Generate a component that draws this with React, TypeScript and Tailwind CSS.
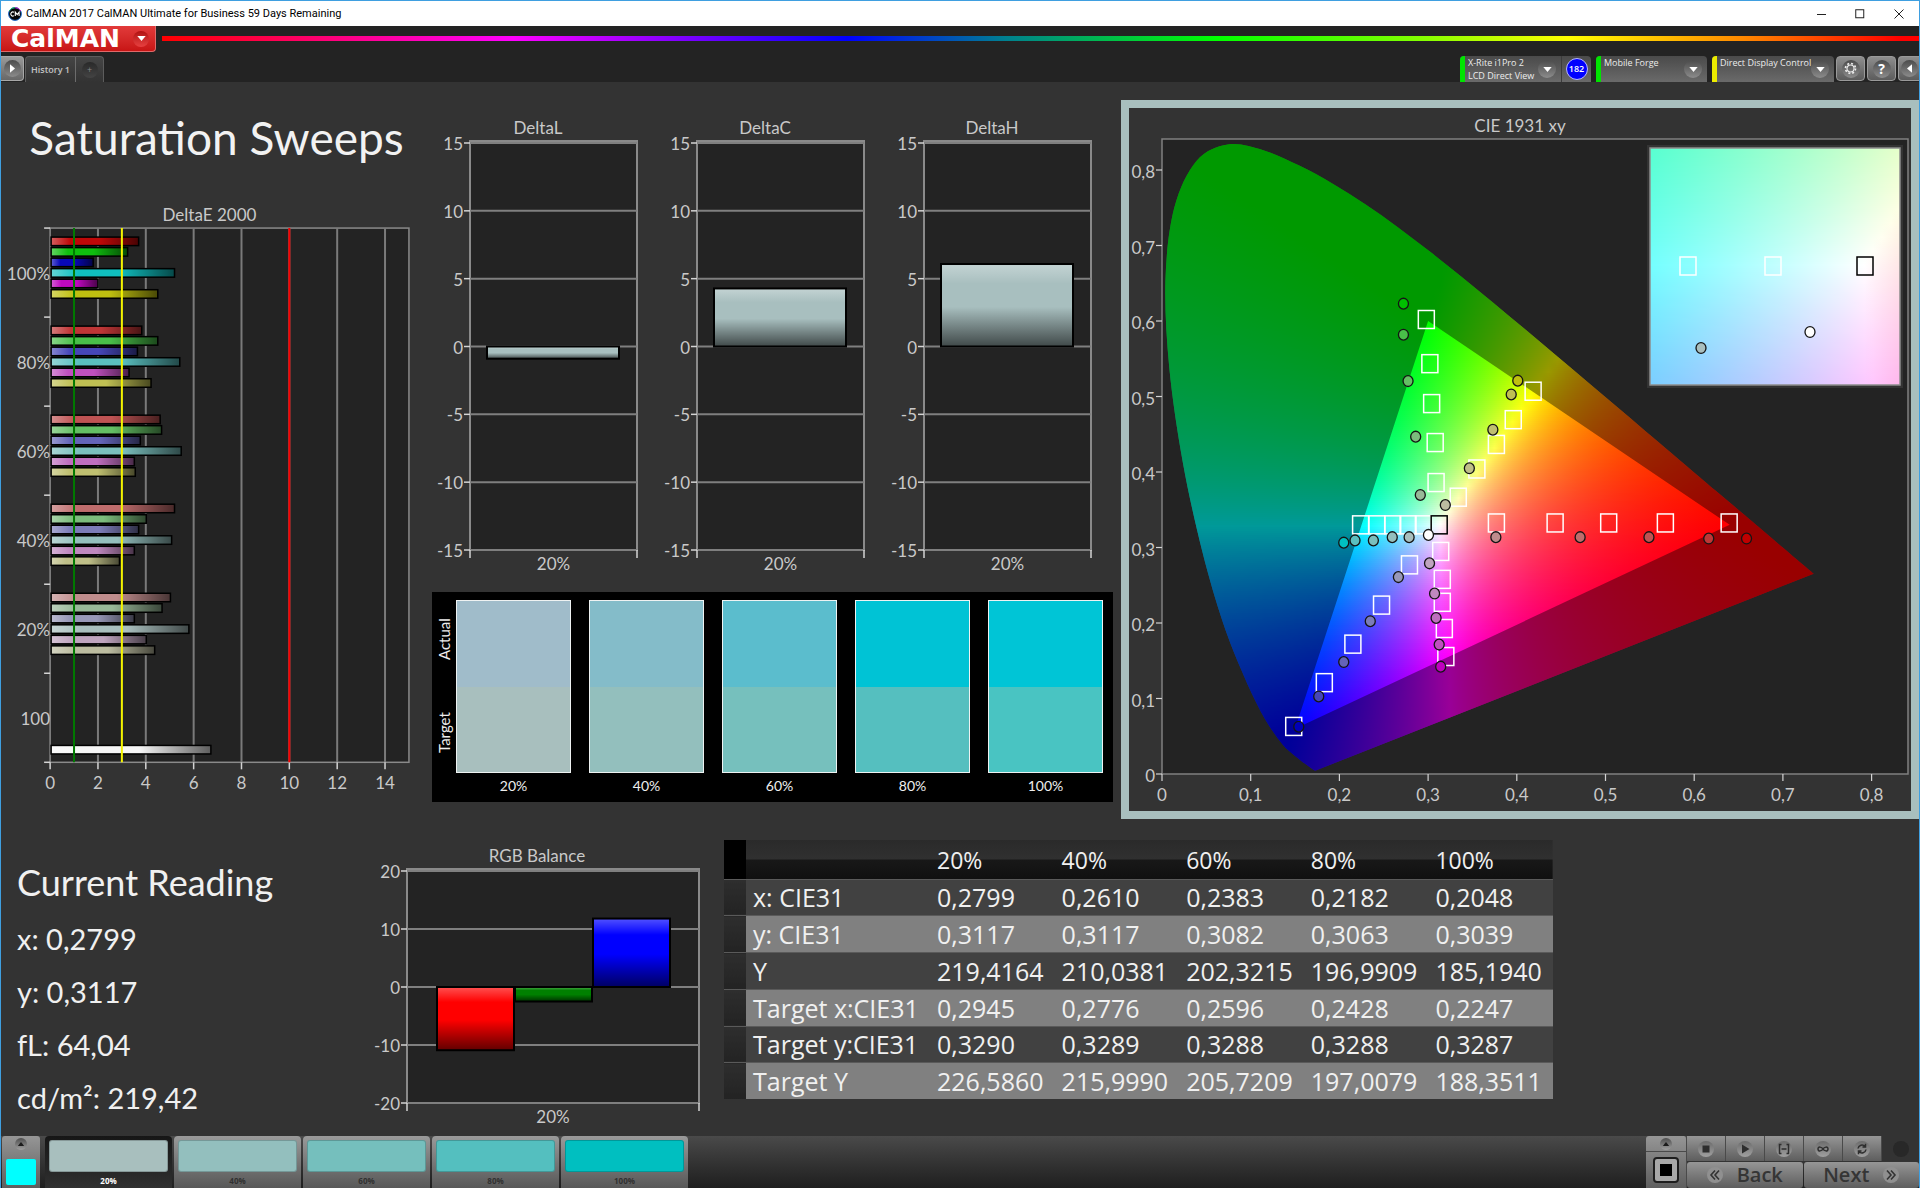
import React from 'react';

const LATO = "font-['Lato','Open_Sans',sans-serif]";
const OPEN = "font-['Open_Sans','Noto_Sans',sans-serif]";

/* ---------- shared chart pieces ---------- */

const AXIS = '#8a8a8a';
const TICK = '#d4d4d4';
const LABEL = '#c9c9c9';
const PLOT = '#232323';

type TextProps = { x: number; y: number; anchor?: 'start' | 'middle' | 'end'; children: React.ReactNode };

function AxisText({ x, y, anchor = 'middle', children }: TextProps) {
  return (
    <text x={x} y={y + 6} textAnchor={anchor} fill={LABEL} className="text-[17px]">
      {children}
    </text>
  );
}

/* ---------- Delta E 2000 ---------- */

const deltaE: { label: string; bars: [string, number][] }[] = [
  { label: '100%', bars: [['#bf0808', 3.7], ['#0fbf0f', 3.24], ['#0808b8', 1.8], ['#10bfbf', 5.2], ['#bf08bf', 2.0], ['#bfbf10', 4.5]] },
  { label: '80%', bars: [['#bf3636', 3.83], ['#49bf49', 4.5], ['#4646b8', 3.65], ['#5abfbf', 5.42], ['#bf50bf', 3.3], ['#bfbf53', 4.22]] },
  { label: '60%', bars: [['#bf5353', 4.6], ['#64bf64', 4.66], ['#6464b8', 3.77], ['#7abfbd', 5.48], ['#bf6ebf', 3.52], ['#bfbf70', 3.56]] },
  { label: '40%', bars: [['#bf6c6c', 5.2], ['#7cbc7c', 4.02], ['#7c7cb8', 3.7], ['#94bfbd', 5.08], ['#bf88bf', 3.52], ['#bfbf88', 2.9]] },
  { label: '20%', bars: [['#bf8c8c', 5.03], ['#98b898', 4.68], ['#9898b8', 3.52], ['#a9bfbe', 5.8], ['#bfa4bf', 4.02], ['#bcbca0', 4.37]] },
];

function DeltaEChart() {
  const left = 49;
  const right = 407;
  const top = 28;
  const bottom = 561;
  const group = (bottom - top) / 6;
  const px = (v: number) => left + v * ((right - left) / 15);
  const bar = (g: number, i: number, color: string, v: number) => {
    const y = top + g * group + 9 + i * 10.5;
    return (
      <g key={`${g}-${i}`}>
        <rect x={left + 1} y={y} width={px(v) - left - 1} height={8.5} fill={color} />
        <rect x={left + 1} y={y} width={px(v) - left - 1} height={8.5} fill="url(#barShadeH)" stroke="#000" strokeWidth={1.5} />
      </g>
    );
  };
  return (
    <svg viewBox="0 0 430 600" className={`block h-auto w-full ${LATO}`} role="img" aria-label="DeltaE 2000">
      <defs>
        <linearGradient id="barShadeH">
          <stop offset="0" stopColor="#fff" stopOpacity=".35" />
          <stop offset=".22" stopColor="#fff" stopOpacity="0" />
          <stop offset=".55" stopColor="#000" stopOpacity="0" />
          <stop offset="1" stopColor="#000" stopOpacity=".62" />
        </linearGradient>
      </defs>
      <AxisText x={208} y={15}>DeltaE 2000</AxisText>
      <rect x={left} y={top} width={right - left} height={bottom - top} fill={PLOT} stroke={AXIS} strokeWidth={1.5} />
      {[2, 4, 6, 8, 10, 12, 14].map((v) => (
        <line key={v} x1={px(v)} x2={px(v)} y1={top} y2={bottom} stroke="#7a7a7a" strokeWidth={2} />
      ))}
      {[0, 2, 4, 6, 8, 10, 12, 14].map((v) => (
        <g key={v}>
          <line x1={px(v)} x2={px(v)} y1={bottom} y2={bottom + 7} stroke={TICK} strokeWidth={1.5} />
          <AxisText x={px(v)} y={582}>{v}</AxisText>
        </g>
      ))}
      {[0, 1, 2, 3, 4, 5, 6].map((i) => (
        <line key={i} x1={left - 6} x2={left} y1={top + i * group} y2={top + i * group} stroke={TICK} strokeWidth={1.5} />
      ))}
      {deltaE.map((g, gi) => (
        <g key={g.label}>
          <AxisText x={49} y={top + gi * group + 46} anchor="end">{g.label}</AxisText>
          {g.bars.map(([c, v], i) => bar(gi, i, c, v))}
        </g>
      ))}
      <AxisText x={49} y={top + 5 * group + 46} anchor="end">100</AxisText>
      {bar(5, 6, '#f6f6f6', 6.72)}
      <line x1={px(1)} x2={px(1)} y1={top} y2={bottom} stroke="#007a00" strokeWidth={2} />
      <line x1={px(3)} x2={px(3)} y1={top} y2={bottom} stroke="#f4f400" strokeWidth={2} />
      <line x1={px(10)} x2={px(10)} y1={top} y2={bottom} stroke="#f80000" strokeWidth={2} />
    </svg>
  );
}

/* ---------- vertical bar charts ---------- */

type VBar = { x: number; w: number; value: number; color: string };
type VChartProps = {
  title: string;
  titleX: number;
  width: number;
  height: number;
  left: number;
  right: number;
  frameTop: number;
  top: number;
  bottom: number;
  max: number;
  step: number;
  bars: VBar[];
};

function VerticalChart(p: VChartProps) {
  const py = (v: number) => p.top + ((p.max - v) / (2 * p.max)) * (p.bottom - p.top);
  const ticks: number[] = [];
  for (let v = p.max; v >= -p.max; v -= p.step) ticks.push(v);
  const id = `shade-${p.title.replace(/\s/g, '')}`;
  return (
    <svg viewBox={`0 0 ${p.width} ${p.height}`} className={`block h-auto w-full ${LATO}`} role="img" aria-label={p.title}>
      <defs>
        <linearGradient id={id} x1="0" y1="0" x2="0" y2="1">
          <stop offset="0" stopColor="#fff" stopOpacity=".32" />
          <stop offset=".24" stopColor="#fff" stopOpacity="0" />
          <stop offset=".52" stopColor="#000" stopOpacity="0" />
          <stop offset="1" stopColor="#000" stopOpacity=".62" />
        </linearGradient>
      </defs>
      <AxisText x={p.titleX} y={p.frameTop - 13}>{p.title}</AxisText>
      <rect x={p.left} y={p.frameTop} width={p.right - p.left} height={p.bottom - p.frameTop} fill={PLOT} stroke={AXIS} strokeWidth={2} />
      {ticks.map((v) => (
        <g key={v}>
          <line x1={p.left} x2={p.right} y1={py(v)} y2={py(v)} stroke="#7f7f7f" strokeWidth={2} />
          <line x1={p.left - 6} x2={p.left} y1={py(v)} y2={py(v)} stroke={TICK} strokeWidth={1.5} />
          <AxisText x={p.left - 7} y={py(v) + 1} anchor="end">{v}</AxisText>
        </g>
      ))}
      {[p.left, p.right].map((x) => (
        <line key={x} x1={x} x2={x} y1={p.bottom} y2={p.bottom + 8} stroke={TICK} strokeWidth={1.5} />
      ))}
      {p.bars.map((b) => {
        const y0 = Math.min(py(0), py(b.value));
        const h = Math.abs(py(0) - py(b.value));
        return (
          <g key={b.x}>
            <rect x={b.x} y={y0} width={b.w} height={h} fill={b.color} />
            <rect x={b.x} y={y0} width={b.w} height={h} fill={`url(#${id})`} stroke="#000" strokeWidth={2} />
          </g>
        );
      })}
      <AxisText x={(p.left + p.right) / 2} y={p.bottom + 14}>20%</AxisText>
    </svg>
  );
}

/* ---------- CIE 1931 diagram ---------- */

const locus: [number, number][] = [
  [0.1741, 0.005], [0.1714, 0.0051], [0.1644, 0.0109], [0.1566, 0.0177], [0.144, 0.0297], [0.1355, 0.0399],
  [0.1241, 0.0578], [0.1096, 0.0868], [0.0913, 0.1327], [0.0687, 0.2007], [0.0454, 0.295], [0.0235, 0.4127],
  [0.0082, 0.5384], [0.0039, 0.6548], [0.0139, 0.7502], [0.0389, 0.812], [0.0743, 0.8338], [0.1142, 0.8262],
  [0.1547, 0.8059], [0.1929, 0.7816], [0.2296, 0.7543], [0.2658, 0.7243], [0.3016, 0.6923], [0.3373, 0.6589],
  [0.3731, 0.6245], [0.4087, 0.5896], [0.4441, 0.5547], [0.4788, 0.5202], [0.5125, 0.4866], [0.5448, 0.4544],
  [0.5752, 0.4242], [0.6029, 0.3965], [0.627, 0.3725], [0.6658, 0.334], [0.6915, 0.3083], [0.719, 0.2809],
  [0.7347, 0.2653],
];
const gamut: [number, number][] = [[0.64, 0.33], [0.3, 0.6], [0.15, 0.06]];

const targets: [number, number][] = [
  [0.298, 0.602], [0.302, 0.5435], [0.304, 0.4906], [0.308, 0.439], [0.309, 0.386],
  [0.4184, 0.507], [0.396, 0.4693], [0.377, 0.4365], [0.355, 0.404], [0.334, 0.3666],
  [0.377, 0.3325], [0.4432, 0.3325], [0.5036, 0.3325], [0.5675, 0.3325], [0.6394, 0.3325],
  [0.2239, 0.33], [0.2423, 0.33], [0.2601, 0.33], [0.2774, 0.33], [0.2947, 0.33],
  [0.279, 0.277], [0.2475, 0.2237], [0.2152, 0.172], [0.183, 0.121], [0.1485, 0.063],
  [0.3142, 0.2948], [0.316, 0.2578], [0.316, 0.2274], [0.3183, 0.1927], [0.32, 0.1556],
];
const measured: [number, number, string][] = [
  [0.2722, 0.623, '#00c000'], [0.2722, 0.5818, '#49bf49'], [0.2774, 0.5204, '#64bf64'], [0.286, 0.4468, '#7cbc7c'], [0.2912, 0.3696, '#98b898'],
  [0.4011, 0.521, '#bfbf10'], [0.3937, 0.5027, '#bfbf53'], [0.373, 0.456, '#bfbf70'], [0.3465, 0.4049, '#bfbf88'], [0.3194, 0.3562, '#bcbca0'],
  [0.3764, 0.3137, '#bf8c8c'], [0.4714, 0.3137, '#bf6c6c'], [0.549, 0.3137, '#bf5353'], [0.6164, 0.3119, '#bf3636'], [0.659, 0.3119, '#c00000'],
  [0.2049, 0.3064, '#00c0c0'], [0.2176, 0.3094, '#5abfbf'], [0.2383, 0.3094, '#7abfbd'], [0.2596, 0.3137, '#94bfbd'], [0.2786, 0.3137, '#a9bfbe'],
  [0.3004, 0.3167, '#ffffff'],
  [0.2665, 0.2608, '#9898b8'], [0.2348, 0.2024, '#7c7cb8'], [0.2049, 0.1483, '#6464b8'], [0.1767, 0.1027, '#4646b8'], [0.1542, 0.0626, '#0000b8'],
  [0.3016, 0.279, '#bfa4bf'], [0.3073, 0.239, '#bf88bf'], [0.309, 0.2067, '#bf6ebf'], [0.3125, 0.1714, '#bf50bf'], [0.3142, 0.1422, '#c000c0'],
];

/* Chromaticity to an RGB colour scaled so that its largest channel is full. */
function chromaColor(x: number, y: number) {
  const yy = Math.max(y, 0.001);
  const X = x / yy;
  const Z = (1 - x - yy) / yy;
  const rgb = [
    3.2406 * X - 1.5372 - 0.4986 * Z,
    -0.9689 * X + 1.8758 + 0.0415 * Z,
    0.0557 * X - 0.204 + 1.057 * Z,
  ].map((c) => Math.max(c, 0));
  const m = Math.max(...rgb, 0.0001);
  return `rgb(${rgb.map((c) => Math.round((c / m) * 255)).join(',')})`;
}

type FieldProps = {
  id: string;
  x: number;
  y: number;
  w: number;
  h: number;
  toXY: (px: number, py: number) => [number, number];
};

/* Thin horizontal strips, each filled with a gradient sampled from the colour space. */
function ColorField({ id, x, y, w, h, toXY }: FieldProps) {
  const rowH = 2;
  const cols = Math.ceil(w / 9);
  const rows = Array.from({ length: Math.ceil(h / rowH) }, (_, i) => y + i * rowH);
  return (
    <g shapeRendering="crispEdges">
      {rows.map((ry, i) => (
        <g key={i}>
          <linearGradient id={`${id}${i}`}>
            {Array.from({ length: cols + 1 }, (_, c) => (
              <stop key={c} offset={c / cols} stopColor={chromaColor(...toXY(x + (c / cols) * w, ry + rowH / 2))} />
            ))}
          </linearGradient>
          <rect x={x} y={ry} width={w} height={rowH} fill={`url(#${id}${i})`} />
        </g>
      ))}
    </g>
  );
}

function smoothPath(pts: [number, number][]) {
  let d = `M${pts[0][0]} ${pts[0][1]}`;
  for (let i = 0; i < pts.length - 1; i++) {
    const p0 = pts[Math.max(i - 1, 0)];
    const p1 = pts[i];
    const p2 = pts[i + 1];
    const p3 = pts[Math.min(i + 2, pts.length - 1)];
    d += `C${p1[0] + (p2[0] - p0[0]) / 6} ${p1[1] + (p2[1] - p0[1]) / 6} ${p2[0] - (p3[0] - p1[0]) / 6} ${p2[1] - (p3[1] - p1[1]) / 6} ${p2[0]} ${p2[1]}`;
  }
  return d + 'Z';
}

function Target({ cx, cy, color = '#fff' }: { cx: number; cy: number; color?: string }) {
  return <rect x={cx - 8} y={cy - 9} width={16} height={18} fill="none" stroke={color} strokeWidth={1.5} />;
}

function Dot({ cx, cy, color }: { cx: number; cy: number; color: string }) {
  return <ellipse cx={cx} cy={cy} rx={5} ry={5.4} fill={color} stroke="#151515" strokeWidth={1.3} />;
}

function CieChart() {
  const left = 33;
  const right = 779;
  const top = 31;
  const bottom = 666;
  const sx = 887;
  const sy = 755;
  const px = (v: number) => left + v * sx;
  const py = (v: number) => bottom - v * sy;
  const locusPath = smoothPath(locus.map(([x, y]) => [px(x), py(y)]));
  const gamutPath = `M${gamut.map(([x, y]) => `${px(x)} ${py(y)}`).join('L')}Z`;
  const inset = { x: 521, y: 40, w: 250, h: 237 };
  const fmt = (i: number) => (i === 0 ? '0' : `0,${i}`);
  return (
    <svg viewBox="0 0 782 703" className={`block h-auto w-full ${LATO}`} role="img" aria-label="CIE 1931 xy">
      <defs>
        <clipPath id="locusClip"><path d={locusPath} /></clipPath>
        <clipPath id="insetClip"><rect x={inset.x} y={inset.y} width={inset.w} height={inset.h} /></clipPath>
      </defs>
      <AxisText x={391} y={18}>CIE 1931 xy</AxisText>
      <rect x={left} y={top} width={right - left} height={bottom - top} fill={PLOT} stroke="#808080" strokeWidth={1.5} />
      <g clipPath="url(#locusClip)">
        <ColorField id="main" x={px(0)} y={Math.floor(py(0.84))} w={0.74 * sx} h={0.84 * sy} toXY={(x, y) => [(x - left) / sx, (bottom - y) / sy]} />
        <path d={`M0 0H782V703H0Z${gamutPath}`} fillRule="evenodd" fill="#000" fillOpacity=".4" />
      </g>
      {[0, 1, 2, 3, 4, 5, 6, 7, 8].map((i) => (
        <g key={i}>
          <line x1={px(i / 10)} x2={px(i / 10)} y1={bottom} y2={bottom + 7} stroke={TICK} strokeWidth={1.2} />
          <line x1={left - 6} x2={left} y1={py(i / 10)} y2={py(i / 10)} stroke={TICK} strokeWidth={1.2} />
          <AxisText x={px(i / 10)} y={687}>{fmt(i)}</AxisText>
          <AxisText x={left - 7} y={py(i / 10) + 2} anchor="end">{fmt(i)}</AxisText>
        </g>
      ))}
      {targets.map(([x, y], i) => <Target key={i} cx={px(x)} cy={py(y)} />)}
      <Target cx={px(0.3125)} cy={py(0.33)} color="#000" />
      {measured.map(([x, y, c], i) => <Dot key={i} cx={px(x)} cy={py(y)} color={c} />)}
      <rect x={inset.x - 3} y={inset.y - 3} width={inset.w + 6} height={inset.h + 6} fill="#333" />
      <g clipPath="url(#insetClip)">
        <ColorField id="inset" {...inset} toXY={(x, y) => [0.2699 + ((x - inset.x) / inset.w) * 0.05, 0.3537 - ((y - inset.y) / inset.h) * 0.05]} />
      </g>
      <rect x={inset.x} y={inset.y} width={inset.w} height={inset.h} fill="none" stroke="#8d8d8d" strokeWidth={1.5} />
      <Target cx={559} cy={158} />
      <Target cx={644} cy={158} />
      <Target cx={736} cy={158} color="#000" />
      <Dot cx={572} cy={240} color="#a9bfbe" />
      <Dot cx={681} cy={224} color="#fff" />
    </svg>
  );
}

/* ---------- swatches ---------- */

const swatches = [
  { label: '20%', actual: '#a0bcca', target: '#a8bfbe', tab: '#a8bfbe' },
  { label: '40%', actual: '#84bcc9', target: '#93bfbd', tab: '#93bfbe' },
  { label: '60%', actual: '#5bbdcd', target: '#76c0bd', tab: '#75bfbd' },
  { label: '80%', actual: '#00c3d5', target: '#55bfbf', tab: '#54bfbf' },
  { label: '100%', actual: '#00c5d6', target: '#49c4c2', tab: '#00bfc0' },
];

function SwatchPanel() {
  return (
    <div className={`flex h-[210px] bg-black pr-[10px] text-[14px] text-[#eeeeee] ${LATO}`}>
      <div className="flex h-[188px] w-6 flex-col items-center text-[15px]">
        <span className="flex flex-1 rotate-180 items-center justify-center [writing-mode:vertical-rl]">Actual</span>
        <span className="flex flex-1 rotate-180 items-center justify-center [writing-mode:vertical-rl]">Target</span>
      </div>
      <div className="grid flex-1 grid-cols-5 gap-x-[18px] pt-2">
        {swatches.map((s) => (
          <div key={s.label} className="flex flex-col items-center">
            <div className="flex h-[173px] w-full flex-col border border-[#eef2f2]">
              <div className="flex-1" style={{ backgroundColor: s.actual }} />
              <div className="flex-1" style={{ backgroundColor: s.target }} />
            </div>
            <span className="mt-[3px] leading-5">{s.label}</span>
          </div>
        ))}
      </div>
    </div>
  );
}

/* ---------- data table ---------- */

const rows = [
  ['x: CIE31', '0,2799', '0,2610', '0,2383', '0,2182', '0,2048'],
  ['y: CIE31', '0,3117', '0,3117', '0,3082', '0,3063', '0,3039'],
  ['Y', '219,4164', '210,0381', '202,3215', '196,9909', '185,1940'],
  ['Target x:CIE31', '0,2945', '0,2776', '0,2596', '0,2428', '0,2247'],
  ['Target y:CIE31', '0,3290', '0,3289', '0,3288', '0,3288', '0,3287'],
  ['Target Y', '226,5860', '215,9990', '205,7209', '197,0079', '188,3511'],
];

function DataTable() {
  return (
    <table className={`h-[259px] w-full table-fixed border-collapse text-left text-[#f0f0f0] ${OPEN}`}>
      <colgroup>
        <col className="w-[22px]" />
        <col className="w-[184px]" />
        <col /><col /><col /><col /><col />
      </colgroup>
      <thead>
        <tr className="h-[39px] bg-[linear-gradient(#2a2a2a_0%,#303030_49%,#181818_51%,#101010_100%)]">
          <td className="bg-black" />
          <td />
          {swatches.map((s) => (
            <th key={s.label} scope="col" className="pt-[2px] pl-[7px] text-[23px] leading-8 font-normal">{s.label}</th>
          ))}
        </tr>
      </thead>
      <tbody className="text-[25px] leading-8">
        {rows.map((r) => (
          <tr key={r[0]} className="border-t border-[#5a5a5a] odd:bg-[#414141] even:bg-[#808080]">
            <td className="bg-[linear-gradient(#2e2e2e,#232323)]" />
            <th scope="row" className="pl-[7px] font-normal whitespace-nowrap">{r[0]}</th>
            {r.slice(1).map((v, i) => <td key={i} className="pl-[7px] whitespace-nowrap">{v}</td>)}
          </tr>
        ))}
      </tbody>
    </table>
  );
}

/* ---------- window chrome ---------- */

function Knob({ children, className = 'size-5' }: { children?: React.ReactNode; className?: string }) {
  return (
    <span className={`grid shrink-0 place-items-center rounded-full bg-linear-to-b from-[#4c4c4c] to-[#8c8c8c] ${className}`}>
      {children}
    </span>
  );
}

function DownArrow({ className = '' }: { className?: string }) {
  return (
    <svg viewBox="0 0 10 6" className={`h-[5px] w-[9px] ${className}`} aria-hidden="true">
      <path d="M0 0H10L5 6Z" fill="#fff" />
    </svg>
  );
}

function TitleBar() {
  return (
    <div className="flex h-[25px] items-center bg-white pl-[7px] text-black">
      <svg viewBox="0 0 14 14" className="size-[14px]" aria-hidden="true">
        <circle cx="7" cy="7" r="6.4" fill="#050505" stroke="#1b6bd0" />
        <path d="M1.2 4A6.4 6.4 0 0 1 7 .6" stroke="#18b860" fill="none" />
        <path d="M7 .6A6.4 6.4 0 0 1 12.8 4" stroke="#c020c0" fill="none" />
        <path d="M6 5.4A2 2 0 1 0 6 8.6M7.3 9V5.2L9.2 7.6L11.1 5.2V9" stroke="#fff" strokeWidth="1.1" fill="none" />
      </svg>
      <h1 className="ml-1 font-['Roboto','Open_Sans',sans-serif] text-[11px] leading-4">CalMAN 2017 CalMAN Ultimate for Business 59 Days Remaining</h1>
      <div className="ml-auto flex">
        <button type="button" aria-label="Minimize" className="grid h-6 w-[38px] place-items-center">
          <svg viewBox="0 0 10 10" className="size-[10px]"><path d="M0 5.5H9" stroke="#222" /></svg>
        </button>
        <button type="button" aria-label="Maximize" className="grid h-6 w-[38px] place-items-center">
          <svg viewBox="0 0 10 10" className="size-[10px]"><rect x=".75" y=".75" width="8" height="8" fill="none" stroke="#222" /></svg>
        </button>
        <button type="button" aria-label="Close" className="grid h-6 w-[40px] place-items-center">
          <svg viewBox="0 0 10 10" className="size-[10px]"><path d="M.5 .5L9.5 9.5M9.5 .5L.5 9.5" stroke="#222" /></svg>
        </button>
      </div>
    </div>
  );
}

function DeviceButton({ lines, bar, width, children }: { lines: string[]; bar: string; width: string; children?: React.ReactNode }) {
  return (
    <div className={`flex h-[26px] overflow-hidden rounded-t-[4px] bg-linear-to-b from-[#4a4a4a] to-[#6a6a6a] ${width}`}>
      <span className={`w-[5px] shrink-0 ${bar}`} />
      <button type="button" className="flex min-w-0 flex-1 items-center justify-between pr-[5px] pl-[3px] text-left">
        <span className="self-start text-[9px] leading-[13px] whitespace-nowrap text-[#ececec]">
          {lines.map((l) => <span key={l} className="block">{l}</span>)}
        </span>
        <Knob className="size-[18px]"><DownArrow /></Knob>
      </button>
      {children}
    </div>
  );
}

function ToolButton({ label, children }: { label: string; children: React.ReactNode }) {
  return (
    <button type="button" aria-label={label} className="grid h-[25px] w-[29px] place-items-center rounded-[4px] border border-[#9a9a9a] bg-linear-to-b from-[#8e8e8e] to-[#5c5c5c]">
      <Knob className="size-[18px]">{children}</Knob>
    </button>
  );
}

function Header() {
  return (
    <header className={`bg-[#232323] ${OPEN}`}>
      <div className="flex h-[30px] items-start">
        <button type="button" className="flex h-[26px] w-[155px] items-center justify-between rounded-br-[4px] border-r border-b border-[#e06a6a] bg-linear-to-b from-[#e23a3a] to-[#c81414] pr-[6px] pl-[10px] font-['DejaVu_Sans',sans-serif] text-[25px] leading-6 font-bold text-white">
          CalMAN
          <span className="grid size-4 place-items-center rounded-full bg-linear-to-b from-[#b01010] to-[#e84040]"><DownArrow className="w-2" /></span>
        </button>
        <div className="mt-[10px] ml-[6px] h-[5px] flex-1 bg-[linear-gradient(to_right,#f00_0%,#f0f_20%,#00f_39%,#008090_48%,#0f0_60%,#8f0_72%,#ff0_80%,#f80_90%,#f00_99%)]" />
      </div>
      <div className="flex h-[26px]">
        <button type="button" aria-label="Expand" className="grid h-[25px] w-[23px] place-items-center rounded-r-[4px] border border-l-0 border-[#a8a8a8] bg-linear-to-b from-[#9a9a9a] to-[#686868]">
          <Knob className="size-[17px]">
            <svg viewBox="0 0 6 10" className="h-[9px] w-[5px]"><path d="M0 0L6 5L0 10Z" fill="#fff" /></svg>
          </Knob>
        </button>
        <nav className="ml-px flex rounded-t-[4px] border border-b-0 border-[#5c5c5c] bg-linear-to-b from-[#454545] to-[#333]">
          <button type="button" className="w-[50px] border-r border-[#6c6c6c] text-center text-[9px] font-semibold whitespace-nowrap text-[#c4c4c4]">History 1</button>
          <button type="button" aria-label="Add tab" className="grid w-[27px] place-items-center">
            <span className="grid size-4 place-items-center rounded-full bg-linear-to-b from-[#292929] to-[#444] text-[9px] leading-none text-[#888]">+</span>
          </button>
        </nav>
        <div className="ml-auto flex">
          <DeviceButton lines={['X-Rite i1Pro 2', 'LCD Direct View']} bar="bg-[#00e400]" width="w-[131px]">
            <span className="grid w-[30px] shrink-0 place-items-center border-l border-[#3c3c3c]">
              <span className="grid size-[22px] place-items-center rounded-full border border-[#b8b8ff] bg-[#0000ff] text-[9px] font-semibold text-white">182</span>
            </span>
          </DeviceButton>
          <span className="w-[5px]" />
          <DeviceButton lines={['Mobile Forge']} bar="bg-[#00e400]" width="w-[111px]" />
          <span className="w-[5px]" />
          <DeviceButton lines={['Direct Display Control']} bar="bg-[#ecec00]" width="w-[122px]" />
          <div className="ml-[2px] flex gap-[2px]">
            <ToolButton label="Settings">
              <svg viewBox="0 0 14 14" className="size-[13px]" fill="none" stroke="#ededed">
                <circle cx="7" cy="7" r="3.8" strokeWidth="1.2" />
                <circle cx="7" cy="7" r="5.4" strokeWidth="1.8" strokeDasharray="2.1 2.14" />
              </svg>
            </ToolButton>
            <ToolButton label="Help"><span className="text-[14px] leading-none font-bold text-white">?</span></ToolButton>
            <button type="button" aria-label="Collapse" className="grid h-[25px] w-[21px] place-items-center rounded-l-[4px] border border-r-0 border-[#9a9a9a] bg-linear-to-b from-[#8e8e8e] to-[#5c5c5c]">
              <Knob className="size-[17px]">
                <svg viewBox="0 0 6 10" className="h-[9px] w-[5px]"><path d="M6 0L0 5L6 10Z" fill="#fff" /></svg>
              </Knob>
            </button>
          </div>
        </div>
      </div>
    </header>
  );
}

/* ---------- footer ---------- */

const STEEL = 'bg-linear-to-b from-[#969696] to-[#5e5e5e]';

function Transport({ label, children }: { label: string; children: React.ReactNode }) {
  return (
    <button type="button" aria-label={label} className={`grid h-[25px] w-[39px] place-items-center border-r border-[#4a4a4a] ${STEEL}`}>
      <span className="grid size-4 place-items-center rounded-full bg-linear-to-b from-[#6c6c6c] to-[#a0a0a0]">
        <svg viewBox="0 0 12 12" className="size-3" fill="none" stroke="#2e2e2e" strokeWidth="1.5">{children}</svg>
      </span>
    </button>
  );
}

function UpKnob() {
  return (
    <span className="grid size-3 place-items-center rounded-full bg-linear-to-b from-[#4e4e4e] to-[#a0a0a0]">
      <svg viewBox="0 0 8 5" className="h-1 w-2"><path d="M4 0L8 5H0Z" fill="#1c1c1c" /></svg>
    </span>
  );
}

function Footer() {
  return (
    <footer className={`flex h-[52px] bg-linear-to-b from-[#4a4a4a] to-[#1f1f1f] ${OPEN}`}>
      <button type="button" aria-label="Current pattern" className={`ml-px flex w-[38px] flex-col items-center justify-between rounded-t-[3px] pt-[2px] pb-[3px] ${STEEL}`}>
        <UpKnob />
        <span className="h-[26px] w-[30px] rounded-[2px] bg-[#00ffff]" />
      </button>
      <div className="ml-[5px] flex gap-[2px]">
        {swatches.map((s, i) => (
          <button
            key={s.label}
            type="button"
            aria-pressed={i === 0}
            className={`flex w-[127px] flex-col items-center rounded-t-[4px] px-1 pt-1 text-[8px] leading-3 font-bold ${i === 0 ? 'bg-linear-to-b from-[#161616] to-[#303030] text-white' : 'bg-linear-to-b from-[#9a9a9a] to-[#585858] text-[#303030]'}`}
          >
            <span className="h-[32px] w-full rounded-[3px] border border-black/20" style={{ backgroundColor: s.tab }} />
            <span className="mt-[3px]">{s.label}</span>
          </button>
        ))}
      </div>
      <div className="ml-auto flex">
        <div className={`flex w-[41px] flex-col items-center rounded-t-[3px] border-r border-[#4a4a4a] ${STEEL}`}>
          <button type="button" aria-label="Expand patterns" className="grid h-4 w-full place-items-center border-b border-[#4a4a4a]"><UpKnob /></button>
          <button type="button" aria-label="Pattern window" className="mt-[5px] grid size-[26px] place-items-center rounded-[4px] border-2 border-[#1e1e1e] bg-[#a8a8a8]">
            <span className="size-3 bg-black" />
          </button>
        </div>
        <div className="flex w-[232px] flex-col gap-px">
          <div className="flex">
            <Transport label="Stop"><rect x="2.5" y="2.5" width="7" height="7" fill="#2e2e2e" stroke="none" /></Transport>
            <Transport label="Play"><path d="M3 1.5L10.5 6L3 10.5Z" fill="#2e2e2e" stroke="none" /></Transport>
            <Transport label="Read series"><path d="M3.5 1.5H1.5V10.5H3.5M8.5 1.5H10.5V10.5H8.5M3.5 6H8.5" /></Transport>
            <Transport label="Read continuous"><path d="M6 6C5 4 1 3 1 6S5 8 6 6S11 3 11 6S7 8 6 6Z" /></Transport>
            <Transport label="Refresh"><path d="M2 5.5A4 4 0 0 1 9 3.5M10 6.5A4 4 0 0 1 3 8.5M9.5 .8V4H6.5M2.5 11.2V8H5.5" /></Transport>
            <span className="grid flex-1 place-items-center bg-[#333]"><span className="size-4 rounded-full bg-[#282828]" /></span>
          </div>
          <div className="flex h-[26px] gap-px text-[20px] leading-6 font-semibold text-[#353535]">
            <button type="button" className={`flex flex-1 items-center justify-center gap-[14px] rounded-[3px] ${STEEL}`}>
              <svg viewBox="0 0 16 16" className="size-4" fill="none" stroke="#333" strokeWidth="1.6"><circle cx="8" cy="8" r="8" fill="#909090" stroke="none" /><path d="M8 3.5L4 8L8 12.5M12 3.5L8 8L12 12.5" /></svg>
              Back
            </button>
            <button type="button" className={`flex flex-1 items-center justify-center gap-[14px] rounded-[3px] ${STEEL}`}>
              Next
              <svg viewBox="0 0 16 16" className="size-4" fill="none" stroke="#333" strokeWidth="1.6"><circle cx="8" cy="8" r="8" fill="#909090" stroke="none" /><path d="M4 3.5L8 8L4 12.5M8 3.5L12 8L8 12.5" /></svg>
            </button>
          </div>
        </div>
      </div>
    </footer>
  );
}

/* ---------- page ---------- */

const deltas = [
  { title: 'DeltaL', value: -0.9 },
  { title: 'DeltaC', value: 4.28 },
  { title: 'DeltaH', value: 6.08 },
];

export default function App() {
  return (
    <div className="flex min-h-screen flex-col border border-b-0 border-[#3f9fe0] bg-[#333333]">
      <TitleBar />
      <Header />
      <main className="flex-1">
        <div className="grid grid-cols-[431fr_689fr_798fr] items-start">
          <section>
            <h2 className={`h-[118px] pt-6 text-center text-[46px] leading-[64px] whitespace-nowrap text-[#f2f2f2] ${LATO}`}>Saturation Sweeps</h2>
            <DeltaEChart />
          </section>
          <section className="pt-[19px] pr-2">
            <div className="grid grid-cols-3">
              {deltas.map((d) => (
                <VerticalChart
                  key={d.title}
                  title={d.title}
                  titleX={106}
                  width={227}
                  height={491}
                  left={38}
                  right={205}
                  frameTop={40}
                  top={42}
                  bottom={449}
                  max={15}
                  step={5}
                  bars={[{ x: 55, w: 132, value: d.value, color: '#a8bfbf' }]}
                />
              ))}
            </div>
            <SwatchPanel />
          </section>
          <section className="mt-[18px] border-8 border-[#a8bfbe]">
            <CieChart />
          </section>
        </div>
        <div className="grid grid-cols-[363fr_360fr_829fr_366fr] items-start pt-[21px]">
          <section className={`pl-4 whitespace-nowrap text-[#f0f0f0] ${LATO}`}>
            <h2 className="pt-4 text-[36px] leading-[52px]">Current Reading</h2>
            <div className="pt-1 text-[29px] leading-[53px]">
              <p>x: 0,2799</p>
              <p>y: 0,3117</p>
              <p>fL: 64,04</p>
              <p>cd/m²: 219,42</p>
            </div>
          </section>
          <VerticalChart
            title="RGB Balance"
            titleX={173}
            width={360}
            height={296}
            left={43}
            right={335}
            frameTop={29}
            top={31}
            bottom={263}
            max={20}
            step={10}
            bars={[
              { x: 73, w: 77, value: -10.9, color: '#ff0000' },
              { x: 151, w: 77, value: -2.5, color: '#008000' },
              { x: 229, w: 77, value: 11.8, color: '#0000ff' },
            ]}
          />
          <DataTable />
        </div>
      </main>
      <Footer />
    </div>
  );
}
